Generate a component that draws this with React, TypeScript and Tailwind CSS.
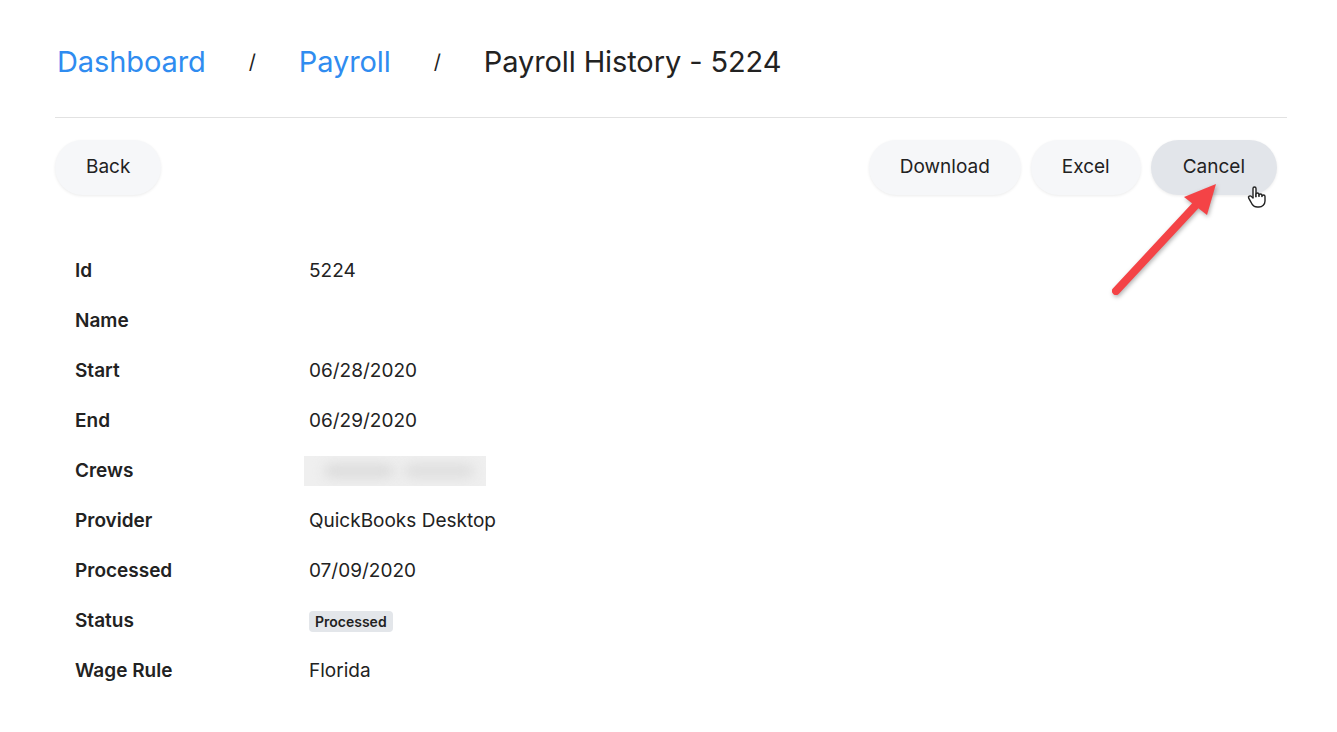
import React from "react";

const rows: { label: string; value: React.ReactNode }[] = [
  { label: "Id", value: "5224" },
  { label: "Name", value: "" },
  { label: "Start", value: "06/28/2020" },
  { label: "End", value: "06/29/2020" },
  {
    label: "Crews",
    value: (
      <div className="relative -ml-[5px] h-[30px] w-[182px] overflow-hidden bg-[#efefef]">
        <div className="absolute left-[20px] top-[8px] h-[14px] w-[70px] rounded-full bg-[#dcdcdc] blur-[6px]" />
        <div className="absolute left-[100px] top-[8px] h-[14px] w-[70px] rounded-full bg-[#dedede] blur-[6px]" />
      </div>
    ),
  },
  { label: "Provider", value: "QuickBooks Desktop" },
  { label: "Processed", value: "07/09/2020" },
  {
    label: "Status",
    value: (
      <span className="inline-flex h-[21px] items-center rounded-[4px] bg-[#e3e6ea] px-[6px] text-[14px] font-semibold text-[#222]">
        Processed
      </span>
    ),
  },
  { label: "Wage Rule", value: "Florida" },
];

function Btn({ children, active }: { children: React.ReactNode; active?: boolean }) {
  return (
    <button
      className={
        "h-[55px] rounded-full text-[19px] text-[#222] shadow-[0_1px_3px_rgba(0,0,0,0.08)] " +
        (active ? "bg-[#e2e5ea] px-[32px]" : "bg-[#f6f7f9] px-[31px]")
      }
    >
      {children}
    </button>
  );
}

export default function App() {
  return (
    <div
      className="relative min-h-[732px] w-[1337px] bg-white pl-[55px] pr-[50px] text-[#222]"
      style={{ fontFamily: "Inter, 'Noto Sans', sans-serif" }}
    >
      <div className="flex h-[118px] items-center gap-[43px] border-b border-[#e2e2e2] pt-[6px] pl-[2px] text-[29px] tracking-[-0.1px]">
        <span className="text-[#2f8cf0]">Dashboard</span>
        <span className="text-[20px] text-[#222]">/</span>
        <span className="text-[#2f8cf0]">Payroll</span>
        <span className="text-[20px] text-[#222]">/</span>
        <span className="text-[#222]">Payroll History - 5224</span>
      </div>

      <div className="mt-[22px] flex items-center justify-between">
        <Btn>Back</Btn>
        <div className="mr-[10px] flex items-center gap-[10px]">
          <Btn>Download</Btn>
          <Btn>Excel</Btn>
          <div className="relative">
            <Btn active>Cancel</Btn>
            <svg
              className="absolute left-[94px] top-[43px]"
              width="24"
              height="28"
              viewBox="0 0 24 24"
              fill="white"
              stroke="#222"
              strokeWidth="1.4"
              strokeLinecap="round"
              strokeLinejoin="round"
            >
              <path d="M8 13V3.5a1.5 1.5 0 0 1 3 0V12" />
              <path d="M11 11.5v-2a1.5 1.5 0 1 1 3 0V12" />
              <path d="M14 10.5a1.5 1.5 0 0 1 3 0V12" />
              <path d="M17 11.5a1.5 1.5 0 0 1 3 0V16a6 6 0 0 1-6 6h-2h.2a6 6 0 0 1-5-2.7L7 19c-.3-.5-1.4-2.4-3.3-5.8a1.5 1.5 0 0 1 .5-2 1.9 1.9 0 0 1 2.3.3L8 13" />
            </svg>
          </div>
        </div>
      </div>

      <div className="mt-[51px] pl-[20px] text-[19px]">
        {rows.map((r) => (
          <div key={r.label} className="flex h-[50px] items-center">
            <div className="w-[234px] font-semibold">{r.label}</div>
            <div className="text-[#222]">{r.value}</div>
          </div>
        ))}
      </div>

      <svg
        className="pointer-events-none absolute left-0 top-0"
        width="1337"
        height="732"
        style={{ filter: "drop-shadow(1px 2px 2px rgba(0,0,0,0.3))" }}
      >
        <line x1="1116" y1="291" x2="1196" y2="205" stroke="#f44346" strokeWidth="8" strokeLinecap="round" />
        <polygon points="1216,184 1184,197 1207,215" fill="#f44346" />
      </svg>
    </div>
  );
}
